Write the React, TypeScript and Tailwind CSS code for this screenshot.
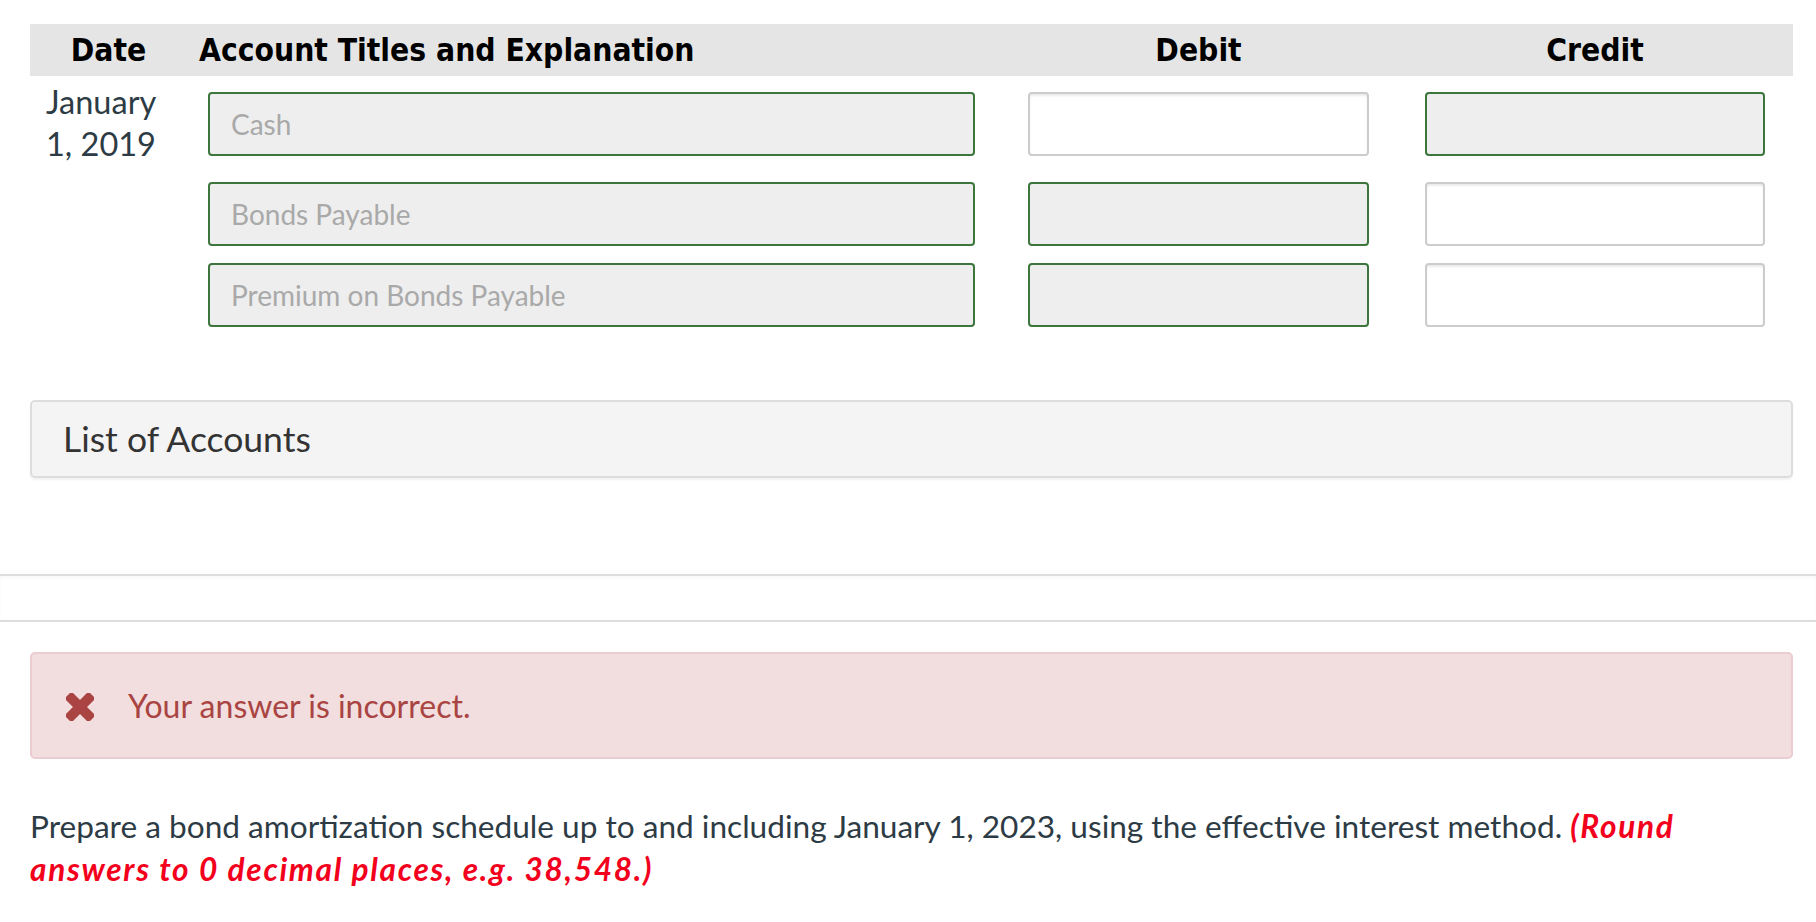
import React from "react";

const lato = { fontFamily: "Lato, 'Noto Sans', sans-serif" };

function GreenBox({ text }: { text?: string }) {
  return (
    <div className="h-[64px] w-full rounded-[4px] border-2 border-[#3c763d] bg-[#eeeeee] flex items-center pl-[21px] text-[28px] text-[#a9a9a9]">
      {text}
    </div>
  );
}

function WhiteBox() {
  return (
    <div className="h-[64px] w-full rounded-[4px] border-2 border-[#cccccc] bg-white shadow-[inset_0_2px_2px_rgba(0,0,0,0.08)]" />
  );
}

export default function App() {
  return (
    <div className="min-h-[922px] w-[1816px] bg-white text-[#2d3b45]" style={lato}>
      <div className="pl-[30px] pr-[23px] pt-[24px]">
        {/* header */}
        <div
          className="grid grid-cols-[160px_810px_397px_396px] h-[52px] items-center bg-[#e5e5e5] text-black font-bold text-[31.5px]"
          style={{ fontFamily: "'DejaVu Sans Condensed', 'DejaVu Sans', sans-serif", fontStretch: "condensed" }}
        >
          <div className="text-center pr-[3px] pt-[2px]">Date</div>
          <div className="pl-[9px] pt-[2px]">Account Titles and Explanation</div>
          <div className="text-center pt-[2px]">Debit</div>
          <div className="text-center pt-[2px]">Credit</div>
        </div>

        {/* rows */}
        <div className="flex flex-col gap-[17px]">
          <div className="grid grid-cols-[160px_810px_397px_396px] items-start">
            <div className="pt-[5px] pl-[16px] text-[32.5px] leading-[42px] text-[#2d3b45]">
              January
              <br />
              1, 2019
            </div>
            <div className="pt-[16px] pl-[18px] pr-[25px]">
              <GreenBox text="Cash" />
            </div>
            <div className="pt-[16px] px-[28px]">
              <WhiteBox />
            </div>
            <div className="pt-[16px] pl-[28px] pr-[28px]">
              <GreenBox />
            </div>
          </div>
          <div className="grid grid-cols-[160px_810px_397px_396px] items-start">
            <div />
            <div className="pl-[18px] pr-[25px]">
              <GreenBox text="Bonds Payable" />
            </div>
            <div className="px-[28px]">
              <GreenBox />
            </div>
            <div className="pl-[28px] pr-[28px]">
              <WhiteBox />
            </div>
          </div>
          <div className="grid grid-cols-[160px_810px_397px_396px] items-start">
            <div />
            <div className="pl-[18px] pr-[25px]">
              <GreenBox text="Premium on Bonds Payable" />
            </div>
            <div className="px-[28px]">
              <GreenBox />
            </div>
            <div className="pl-[28px] pr-[28px]">
              <WhiteBox />
            </div>
          </div>
        </div>

        {/* list of accounts */}
        <div className="mt-[73px] h-[78px] rounded-[5px] border-2 border-[#dddddd] bg-[#f4f4f4] shadow-[0_2px_2px_rgba(0,0,0,0.05)] flex items-center pl-[31px] text-[35.5px] text-[#333333]">
          List of Accounts
        </div>
      </div>

      {/* separators */}
      <div className="mt-[96px] h-[2px] bg-[#dddddd]" />
      <div className="h-[44px] bg-white shadow-[inset_0_2px_3px_rgba(0,0,0,0.03)]" />
      <div className="h-[2px] bg-[#dddddd]" />

      <div className="pl-[30px] pr-[23px]">
        <div className="mt-[30px] h-[107px] rounded-[5px] border-2 border-[#ebccd1] bg-[#f2dede] flex items-center pl-[34px] text-[#a94442]">
          <svg width="28" height="28" viewBox="0 0 28 28" className="mr-[34px] mt-[2px]">
            <g fill="#a94442">
              <rect x="-3" y="9" width="34" height="10" rx="2.5" transform="rotate(45 14 14)" />
              <rect x="-3" y="9" width="34" height="10" rx="2.5" transform="rotate(-45 14 14)" />
            </g>
          </svg>
          <span className="text-[32px]">Your answer is incorrect.</span>
        </div>

        <p className="mt-[46px] text-[31.6px] leading-[43px] text-[#2d3b45]">
          Prepare a bond amortization schedule up to and including January 1, 2023, using the effective interest method.{" "}
          <span className="font-bold italic tracking-[1.7px] text-[#f2001c]">
            (Round
            <br />
            answers to 0 decimal places, e.g. 38,548.)
          </span>
        </p>
      </div>
    </div>
  );
}
